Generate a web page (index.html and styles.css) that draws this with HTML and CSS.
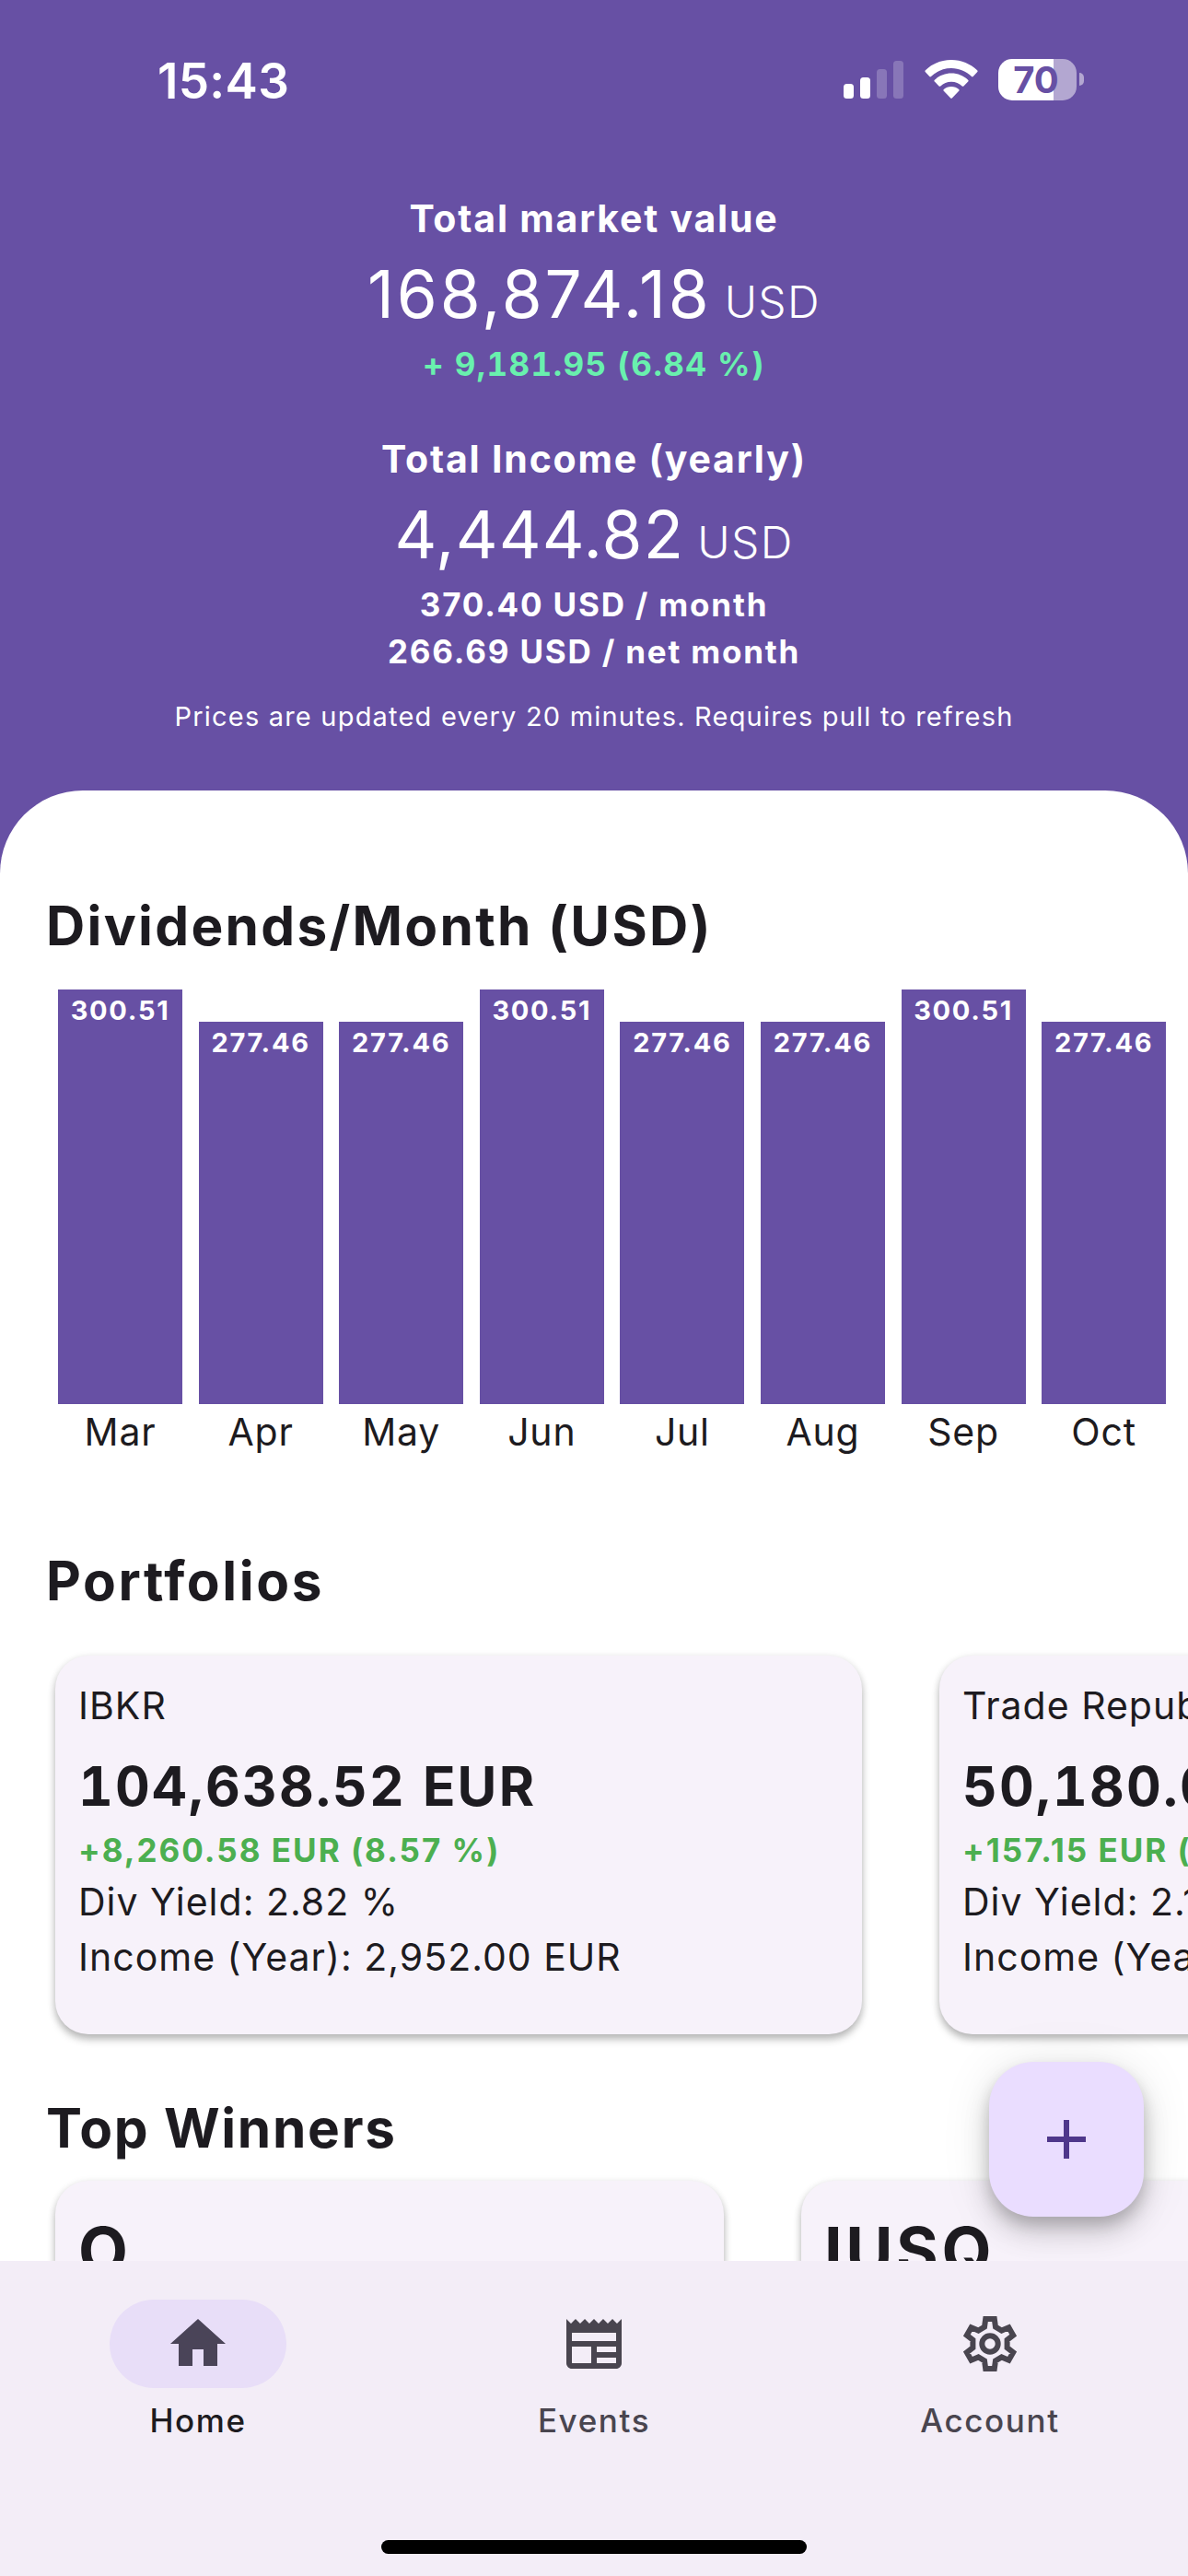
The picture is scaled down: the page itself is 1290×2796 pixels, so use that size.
FILE: index.html
```
<!DOCTYPE html>
<html lang="en">
<head>
  <meta charset="utf-8"/>
  <title>Dividend Portfolio</title>
  <link rel="stylesheet" href="styles.css">
</head>
<body>
  <header class="header">
    <div class="status-bar">
      <span class="time">15:43</span>
      <div class="status-icons">
        <svg class="signal" viewBox="0 0 65 41" fill="#fff">
          <rect x="0" y="25" width="11" height="16" rx="3.5"/>
          <rect x="18" y="18" width="11" height="23" rx="3.5"/>
          <rect x="36" y="9" width="11" height="32" rx="3.5" opacity=".22"/>
          <rect x="54" y="0" width="11" height="41" rx="3.5" opacity=".22"/>
        </svg>
        <svg class="wifi" viewBox="0 0 58 42" fill="#fff">
          <path d="M29 0C18 0 8.200 4.300 .9 11.300q-1 1 0 2L5.300 18q.8.8 1.700 0C12.800 12.500 20.500 9 29 9s16.200 3.500 22 9q.9.8 1.700 0l4.400-4.700q1-1 0-2C49.800 4.300 40 0 29 0z"/>
          <path d="M29 14.500c-7 0-13.400 2.700-18.100 7.200q-1 1-.1 1.900l4.800 4.800q.8.800 1.700 0C20.400 25.500 24.500 23.700 29 23.700s8.600 1.800 11.700 4.700q.9.800 1.700 0l4.800-4.800q.9-.9-.1-1.900C42.400 17.200 36 14.500 29 14.500z"/>
          <path d="M29 29c-3.200 0-6.100 1.200-8.200 3.100q-.8.8 0 1.600l7.200 7.600q1 1 2 0l7.200-7.600q.8-.8 0-1.600C35.100 30.200 32.200 29 29 29z"/>
        </svg>
        <div class="battery"><span>70</span></div>
        <div class="battery-cap"></div>
      </div>
    </div>

    <h2 class="total-title">Total market value</h2>
    <p class="total"><span class="amount">168,874.18</span><span class="currency">USD</span></p>
    <p class="detail gain">+ 9,181.95 (6.84 %)</p>

    <h2 class="total-title income-title">Total Income (yearly)</h2>
    <p class="total"><span class="amount income">4,444.82</span><span class="currency">USD</span></p>
    <p class="detail">370.40 USD / month</p>
    <p class="detail">266.69 USD / net month</p>
    <p class="note">Prices are updated every 20 minutes. Requires pull to refresh</p>
  </header>

  <main class="sheet">
    <h1 class="dividends-title">Dividends/Month (USD)</h1>
    <div class="chart">
      <div class="month"><div class="bar" style="height: 450px">300.51</div><span>Mar</span></div>
      <div class="month"><div class="bar" style="height: 415px">277.46</div><span>Apr</span></div>
      <div class="month"><div class="bar" style="height: 415px">277.46</div><span>May</span></div>
      <div class="month"><div class="bar" style="height: 450px">300.51</div><span>Jun</span></div>
      <div class="month"><div class="bar" style="height: 415px">277.46</div><span>Jul</span></div>
      <div class="month"><div class="bar" style="height: 415px">277.46</div><span>Aug</span></div>
      <div class="month"><div class="bar" style="height: 450px">300.51</div><span>Sep</span></div>
      <div class="month"><div class="bar" style="height: 415px">277.46</div><span>Oct</span></div>
    </div>

    <h1 class="portfolios-title">Portfolios</h1>
    <div class="cards">
      <div class="card portfolio">
        <p class="line">IBKR</p>
        <p class="value">104,638.52 EUR</p>
        <p class="change">+8,260.58 EUR (8.57 %)</p>
        <p class="line">Div Yield: 2.82 %</p>
        <p class="line">Income (Year): 2,952.00 EUR</p>
      </div>
      <div class="card portfolio">
        <p class="line">Trade Republic</p>
        <p class="value">50,180.03 EUR</p>
        <p class="change">+157.15 EUR (0.31 %)</p>
        <p class="line">Div Yield: 2.10 %</p>
        <p class="line">Income (Year): 1,053.00 EUR</p>
      </div>
    </div>

    <h1 class="winners-title">Top Winners</h1>
    <div class="cards">
      <div class="card winner">O</div>
      <div class="card winner">IUSQ</div>
    </div>
  </main>

  <button class="fab" aria-label="Add">
    <svg viewBox="0 0 24 24"><path d="M19 13h-6v6h-2v-6H5v-2h6V5h2v6h6z"/></svg>
  </button>

  <nav class="nav">
    <div class="tabs">
      <a class="tab active">
        <span class="pill"><svg viewBox="0 0 24 24"><path d="M10 20v-6h4v6h5v-8h3L12 3 2 12h3v8z"/></svg></span>
        Home
      </a>
      <a class="tab">
        <span class="pill"><svg viewBox="0 0 24 24"><path d="M22 3l-1.670 1.670L18.670 3 17 4.670 15.330 3l-1.660 1.670L12 3l-1.670 1.670L8.670 3 7 4.670 5.330 3 3.670 4.670 2 3v16c0 1.100.9 2 2 2h16c1.100 0 2-.9 2-2V3zM11 19H4v-6h7v6zm9 0h-7v-2h7v2zm0-4h-7v-2h7v2zm0-4H4V8h16v3z"/></svg></span>
        Events
      </a>
      <a class="tab">
        <span class="pill"><svg class="gear" viewBox="0 0 24 24"><path d="M10.400 3h3.200l.4 2.900 2.200 1.300 2.600-1.100 1.600 2.800-2.200 1.700v2.800l2.200 1.700-1.600 2.800-2.600-1.100-2.200 1.300-.4 2.900h-3.200l-.4-2.900-2.200-1.300-2.600 1.100-1.600-2.800 2.200-1.700v-2.800L3.600 8.900l1.600-2.800 2.600 1.100L10 5.900z"/><circle cx="12" cy="12" r="2.900"/></svg></span>
        Account
      </a>
    </div>
    <div class="home-indicator"></div>
  </nav>
</body>
</html>
```
FILE: styles.css
```
* {
  box-sizing: border-box;
}
body {
  margin: 0;
  width: 1290px;
  height: 2796px;
  overflow: hidden;
  position: relative;
  display: flex;
  flex-direction: column;
  font-family: Inter, "Liberation Sans", sans-serif;
  color: #1d1b20;
  background-color: #6750a4;
}
h1, h2, p {
  margin: 0;
  white-space: nowrap;
}

/* header */
.header {
  height: 858px;
  flex: none;
  color: #fff;
  text-align: center;
}
.status-bar {
  height: 207px;
  padding: 56px 113px 0 171px;
  display: flex;
  justify-content: space-between;
  align-items: flex-start;
}
.time {
  font-size: 53px;
  line-height: 64px;
  font-weight: 600;
  letter-spacing: 0.3px;
}
.status-icons {
  display: flex;
  align-items: center;
  height: 60px;
}
.signal {
  width: 65px;
  height: 41px;
}
.wifi {
  width: 58px;
  height: 42px;
  margin: 0 22px 0 23px;
}
.battery {
  width: 85px;
  height: 45px;
  border-radius: 15px;
  background: linear-gradient(to right, #fff 60px, #b3a7d1 60px);
  color: #6750a4;
  font-size: 40px;
  font-weight: 700;
  line-height: 45px;
  text-align: center;
  padding-right: 3px;
}
.battery-cap {
  width: 5px;
  height: 14px;
  margin-left: 3px;
  border-radius: 0 5px 5px 0;
  background-color: #b3a7d1;
}
.total-title {
  font-size: 41px;
  line-height: 60px;
  font-weight: 700;
  letter-spacing: 1.8px;
}
.income-title {
  margin-top: 47px;
}
.total {
  height: 103px;
  line-height: 105px;
  font-size: 71px;
}
.amount {
  letter-spacing: 2.9px;
}
.amount.income {
  letter-spacing: 1.2px;
}
.currency {
  font-size: 48px;
  font-weight: 350;
  letter-spacing: 1.4px;
  margin-left: 14px;
}
.detail {
  font-size: 35px;
  line-height: 51px;
  font-weight: 700;
  letter-spacing: 1.8px;
}
.gain {
  color: #69f0ae;
  letter-spacing: 1.4px;
  font-variant-numeric: tabular-nums;
}
.note {
  margin-top: 24px;
  font-size: 29px;
  line-height: 42px;
  letter-spacing: 1.2px;
}

/* content sheet */
.sheet {
  flex: none;
  height: 1596px;
  overflow: hidden;
  background-color: #fff;
  border-radius: 90px 90px 0 0;
}
h1 {
  padding-left: 50px;
  font-size: 58.500px;
  line-height: 84px;
  font-weight: 700;
  letter-spacing: 1.7px;
}
.dividends-title {
  margin-top: 105px;
  letter-spacing: 2.3px;
}
.portfolios-title {
  margin-top: 78px;
  letter-spacing: 2.6px;
}
.winners-title {
  margin-top: 60px;
}
.chart {
  display: flex;
  align-items: flex-end;
  gap: 17.600px;
  height: 522px;
  margin-top: 27px;
  padding-left: 63px;
}
.month {
  flex: none;
  width: 135px;
  text-align: center;
  font-size: 41px;
  line-height: 60px;
  letter-spacing: 0.8px;
}
.month span {
  display: block;
  height: 72px;
}
.bar {
  background-color: #6750a4;
  color: #fff;
  font-size: 29px;
  line-height: 46px;
  font-weight: 700;
  letter-spacing: 1.7px;
}
.cards {
  display: flex;
  gap: 84px;
  margin-left: 60px;
}
.card {
  flex: none;
  background-color: #f7f2fa;
  border-radius: 36px;
  box-shadow: 0 6px 9px rgba(0, 0, 0, 0.22), 0 2px 9px rgba(0, 0, 0, 0.12);
}
.portfolio {
  width: 876px;
  height: 411px;
  margin-top: 39px;
  padding: 24px 25px;
}
.winner {
  width: 726px;
  height: 400px;
  margin-top: 15px;
  padding: 36px 25px;
  font-size: 70px;
  line-height: 80px;
  font-weight: 700;
  letter-spacing: 3.6px;
}
.line {
  font-size: 41px;
  line-height: 60px;
  letter-spacing: 1px;
}
.value {
  margin-top: 14px;
  font-size: 58.500px;
  line-height: 88px;
  font-weight: 700;
  letter-spacing: 2.2px;
  font-variant-numeric: tabular-nums;
}
.change {
  color: #4caf50;
  font-size: 35px;
  line-height: 51px;
  font-weight: 700;
  letter-spacing: 2px;
}

.fab {
  position: absolute;
  right: 48px;
  top: 2238px;
  width: 168px;
  height: 168px;
  border: none;
  border-radius: 48px;
  background-color: #eaddff;
  box-shadow: 0 9px 15px rgba(0, 0, 0, 0.16), 0 18px 30px rgba(0, 0, 0, 0.14), 0 3px 54px rgba(0, 0, 0, 0.1);
  display: flex;
  align-items: center;
  justify-content: center;
}
.fab svg {
  width: 72px;
  height: 72px;
  fill: #4f378b;
}

/* bottom navigation */
.nav {
  position: relative;
  flex: none;
  height: 342px;
  background-color: #f3edf7;
  padding-top: 42px;
}
.tabs {
  display: flex;
  height: 261px;
}
.tab {
  flex: 1;
  display: flex;
  flex-direction: column;
  align-items: center;
  gap: 11px;
  color: #49454f;
  font-size: 35px;
  line-height: 48px;
  font-weight: 500;
  letter-spacing: 1.6px;
}
.tab.active {
  color: #1d1b20;
}
.pill {
  width: 192px;
  height: 96px;
  border-radius: 48px;
  display: flex;
  align-items: center;
  justify-content: center;
}
.active .pill {
  background-color: #e8def8;
}
.pill svg {
  width: 72px;
  height: 72px;
  fill: #49454f;
}
.active .pill svg {
  fill: #4a4458;
}
.pill .gear {
  fill: none;
  stroke: #49454f;
  stroke-width: 2;
}
.home-indicator {
  width: 462px;
  height: 15px;
  margin: 0 auto;
  border-radius: 8px;
  background-color: #000;
}
```
